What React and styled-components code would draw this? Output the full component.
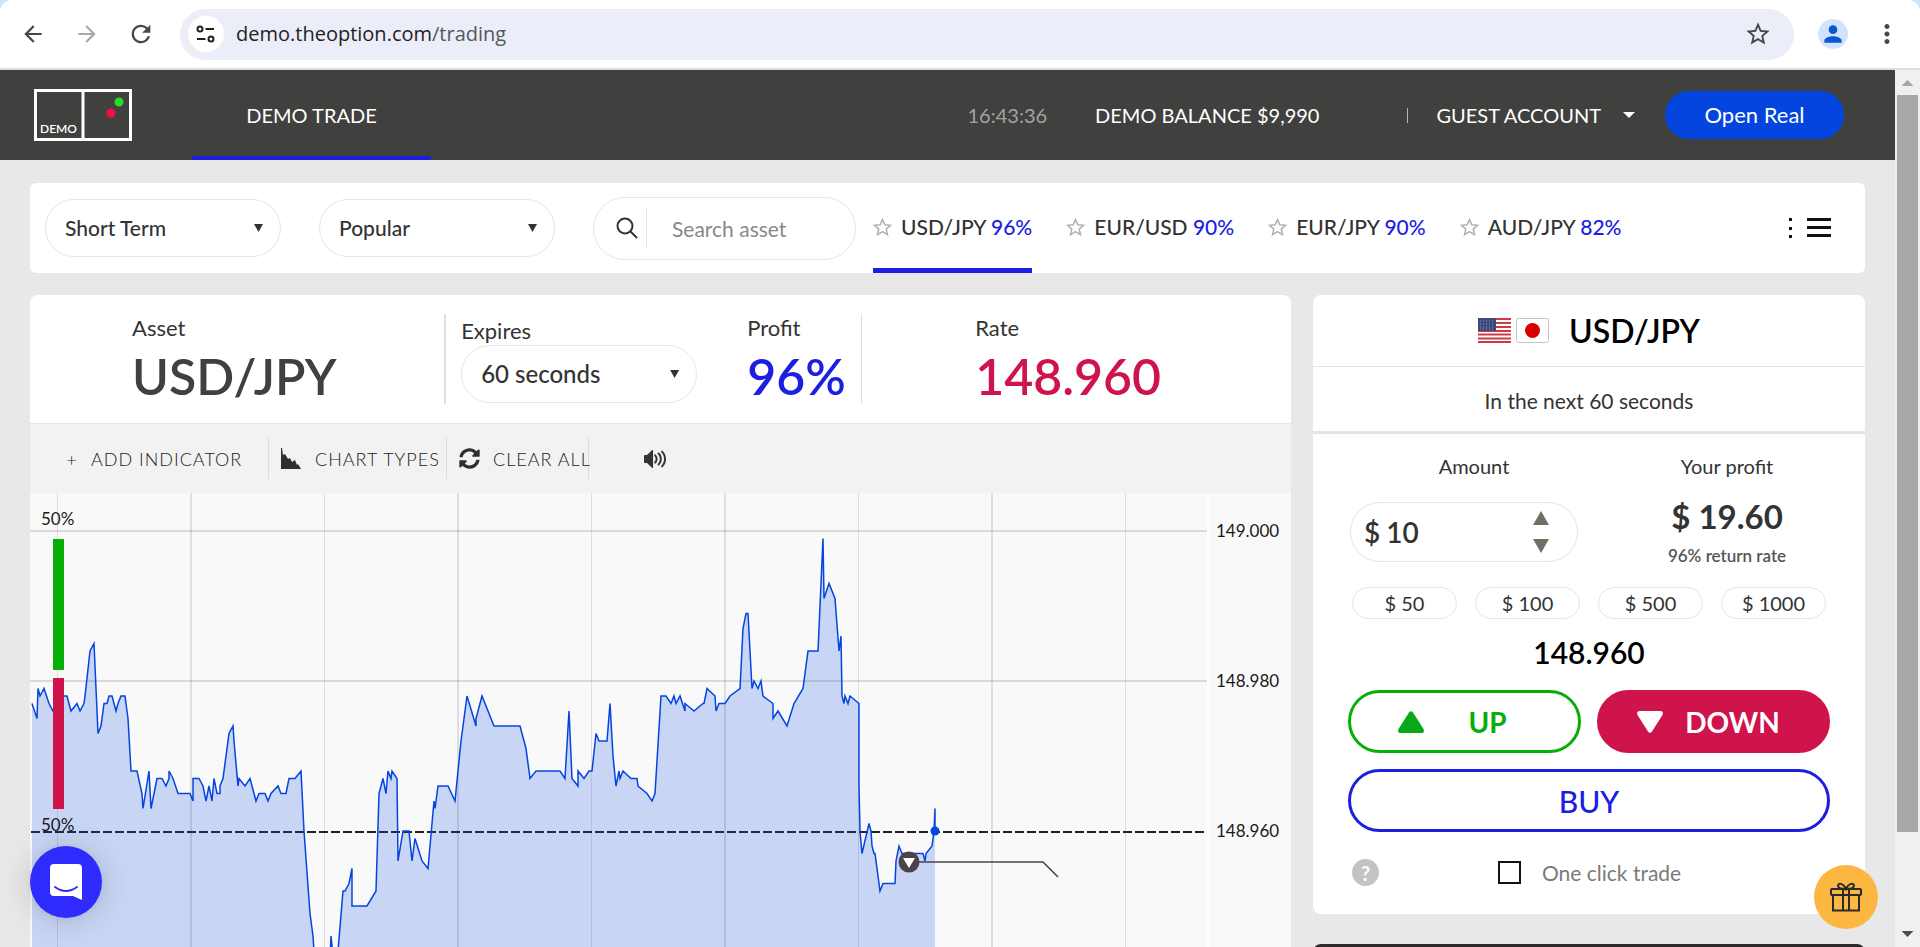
import React, { useState } from "react";
import styled, { createGlobalStyle, css } from "styled-components";
import {
  MdArrowBack,
  MdArrowForward,
  MdRefresh,
  MdStarBorder,
  MdMoreVert,
  MdPerson,
} from "react-icons/md";
import { FaSyncAlt } from "react-icons/fa";
import { ImVolumeHigh } from "react-icons/im";

// chart
const BASE_Y = 38;
const PIP_HEIGHT = 7.5;
const GRID_STEP = 133.5;

// [x, pips below 149.000]
const TICKS = [
  [2, 23], [7, 25], [8, 21], [10, 22], [14, 21], [19, 23], [23, 24], [33, 22],
  [37, 22], [41, 24], [47, 23], [50, 24], [54, 23], [55, 22], [60, 16], [64, 15],
  [65, 18], [68, 27], [71, 26], [74, 23], [77, 23], [79, 22], [82, 22], [86, 24],
  [88, 23], [91, 22], [95, 22], [98, 25], [101, 32], [107, 32], [112, 35], [113, 37],
  [119, 32], [121, 37], [127, 33], [132, 33], [136, 34], [139, 33], [139, 32], [143, 33],
  [148, 35], [160, 35], [163, 36], [163, 33], [169, 33], [173, 34], [176, 36], [179, 34],
  [182, 36], [184, 33], [187, 35], [190, 35], [190, 34], [193, 33], [199, 27], [203, 26],
  [204, 28], [208, 34], [209, 33], [215, 34], [220, 33], [226, 36], [229, 35], [235, 35],
  [238, 36], [241, 35], [248, 34], [251, 35], [256, 35], [259, 33], [265, 33], [271, 32],
  [274, 40], [280, 51], [283, 54], [285, 58], [290, 66], [297, 66], [301, 54], [304, 58],
  [308, 56], [313, 48], [315, 48], [319, 47], [322, 45], [322, 50], [337, 50], [346, 48],
  [349, 35], [353, 33], [356, 35], [358, 32], [361, 33], [362, 32], [367, 33], [368, 44],
  [373, 40], [379, 40], [382, 44], [385, 41], [392, 44], [398, 45], [404, 36], [405, 37],
  [408, 34], [418, 34], [425, 36], [431, 28], [437, 22], [446, 26], [446, 25], [452, 22],
  [464, 26], [490, 26], [496, 29], [500, 33], [506, 32], [530, 32], [535, 33], [539, 24],
  [542, 33], [548, 34], [548, 32], [554, 33], [559, 32], [562, 32], [566, 27], [569, 28],
  [577, 28], [580, 23], [583, 30], [586, 34], [589, 32], [590, 33], [593, 32], [601, 33],
  [607, 33], [608, 34], [617, 35], [622, 36], [625, 35], [631, 22], [636, 22], [641, 23],
  [644, 22], [646, 23], [650, 22], [655, 24], [655, 23], [664, 24], [673, 23], [674, 23],
  [677, 21], [685, 22], [686, 24], [689, 23], [695, 23], [700, 22], [710, 21], [713, 13],
  [716, 11], [718, 11], [722, 21], [724, 20], [728, 21], [731, 20], [733, 22], [743, 23],
  [743, 25], [748, 24], [757, 26], [764, 23], [773, 21], [778, 16], [788, 16], [793, 1],
  [794, 9], [799, 7], [805, 9], [809, 16], [811, 14], [812, 22], [814, 23], [815, 22],
  [818, 23], [820, 22], [829, 23], [829, 34], [830, 40], [832, 43], [839, 39], [841, 40],
  [842, 42], [844, 43], [845, 43], [850, 48], [853, 47], [865, 47], [866, 44], [869, 42],
  [872, 43], [893, 43], [895, 44], [896, 43], [902, 42], [904, 40], [905, 37], [905, 40],
];

const linePoints = TICKS.map(([x, pips]) => `${x},${BASE_Y + pips * PIP_HEIGHT}`).join(" ");
const areaPoints = `${TICKS[0][0]},2000 ${linePoints} 905,2000`;

const ASSETS = [
  { name: "USD/JPY", rate: "96%" },
  { name: "EUR/USD", rate: "90%" },
  { name: "EUR/JPY", rate: "90%" },
  { name: "AUD/JPY", rate: "82%" },
];

const PRICES = ["149.000", "148.980", "148.960"];
const QUICK_AMOUNTS = [50, 100, 500, 1000];

function BrowserBar() {
  return (
    <Browser>
      <BrowserButton aria-label="Back">
        <MdArrowBack size={26} />
      </BrowserButton>
      <BrowserButton aria-label="Forward" $color="#a9a9a9">
        <MdArrowForward size={26} />
      </BrowserButton>
      <BrowserButton aria-label="Reload">
        <MdRefresh size={28} />
      </BrowserButton>
      <AddressBar>
        <SiteInfo aria-label="Site information">
          <svg width="20" height="20" viewBox="0 0 20 20" fill="none" stroke="#1f1f1f" strokeWidth="2">
            <circle cx="4" cy="5" r="2.5" />
            <path d="M9.500 5H18M1 15h8.500" />
            <circle cx="15" cy="15" r="2.500" />
          </svg>
        </SiteInfo>
        <Address>
          demo.theoption.com<span>/trading</span>
        </Address>
        <BrowserButton aria-label="Bookmark">
          <MdStarBorder size={28} />
        </BrowserButton>
      </AddressBar>
      <Profile aria-label="Profile">
        <MdPerson size={26} />
      </Profile>
      <BrowserButton aria-label="Menu">
        <MdMoreVert size={30} />
      </BrowserButton>
    </Browser>
  );
}

function Header() {
  return (
    <HeaderBar>
      <Logo>
        <svg width="98" height="52" viewBox="0 0 98 52" fill="none">
          <path d="M1.500 1.500h95v49h-95zM49 0v52" stroke="#fff" strokeWidth="3" />
          <circle cx="85" cy="13" r="4.500" fill="#27dc2b" />
          <circle cx="77" cy="24" r="4.500" fill="#f30f45" />
        </svg>
        <LogoText>DEMO</LogoText>
      </Logo>
      <NavLink href="#trade">DEMO TRADE</NavLink>
      <HeaderRight>
        <Clock>16:43:36</Clock>
        <Balance>DEMO BALANCE $9,990</Balance>
        <HeaderLine />
        <AccountButton>
          GUEST ACCOUNT
          <Triangle $w={12} $h={6} $down />
        </AccountButton>
        <OpenReal>Open Real</OpenReal>
      </HeaderRight>
    </HeaderBar>
  );
}

function Dropdown({ label, value, size }) {
  return (
    <SelectWrap>
      <Select aria-label={label} defaultValue={value} $size={size}>
        <option>{value}</option>
      </Select>
    </SelectWrap>
  );
}

function Filters() {
  return (
    <FilterBar>
      <Dropdown label="Option type" value="Short Term" />
      <Dropdown label="Category" value="Popular" />
      <Search>
        <svg width="22" height="22" viewBox="0 0 22 22" fill="none" stroke="#333" strokeWidth="2">
          <circle cx="9" cy="9" r="7.500" />
          <path d="M14.500 14.500L21 21" />
        </svg>
        <input type="text" aria-label="Search asset" placeholder="Search asset" />
      </Search>
      <Tabs>
        {ASSETS.map((asset, i) => (
          <Tab key={asset.name} $active={i === 0}>
            <svg width="19" height="18" viewBox="0 0 19 18" fill="none" stroke="#b0b0b0" strokeWidth="1.500">
              <path d="M9.500 1.500l2.300 5.300 5.700.5-4.300 3.800 1.300 5.600-5-3-5 3 1.300-5.600L1.500 7.300l5.700-.5z" />
            </svg>
            <TabText>
              {asset.name} <em>{asset.rate}</em>
            </TabText>
          </Tab>
        ))}
      </Tabs>
      <ListButton aria-label="Asset list">
        <svg width="42" height="22" viewBox="0 0 42 22" fill="#111">
          <path d="M0 1h3v3H0zM0 10h3v3H0zM0 18h3v3H0zM18 1h24v3H18zM18 9h24v3H18zM18 17h24v3H18z" />
        </svg>
      </ListButton>
    </FilterBar>
  );
}

function AssetInfo() {
  return (
    <InfoBar>
      <InfoCell $left={102} $line={2}>
        <InfoLabel>Asset</InfoLabel>
        <InfoValue $color="#40403e">USD/JPY</InfoValue>
      </InfoCell>
      <InfoCell $left={15} $line={1} $row>
        <ExpiresField>
          <InfoLabel>Expires</InfoLabel>
          <Dropdown label="Expires" value="60 seconds" size={24} />
        </ExpiresField>
        <div>
          <InfoLabel>Profit</InfoLabel>
          <InfoValue $color="#1c1ee0">96%</InfoValue>
        </div>
      </InfoCell>
      <InfoCell $left={113}>
        <InfoLabel>Rate</InfoLabel>
        <InfoValue $color="#cf134b">148.960</InfoValue>
      </InfoCell>
    </InfoBar>
  );
}

function ChartToolbar() {
  return (
    <Toolbar>
      <ToolButton $w={203}>
        <PlusSign>+</PlusSign>
        ADD INDICATOR
      </ToolButton>
      <ToolButton $w={178}>
        <svg width="21" height="21" viewBox="0 0 21 21" fill="#2e2e2c">
          <path d="M0 0h1l1 7 2-1 3 5 2-1 2 4 3-2 2 5 1-1 3 5h1v1H0z" />
        </svg>
        CHART TYPES
      </ToolButton>
      <ToolButton $w={142}>
        <FaSyncAlt size={21} />
        CLEAR ALL
      </ToolButton>
      <SoundButton aria-label="Sound">
        <ImVolumeHigh size={22} />
      </SoundButton>
    </Toolbar>
  );
}

function Chart() {
  return (
    <ChartArea>
      <Plot>
        {Array.from({ length: 9 }, (_, i) => (
          <line
            key={i}
            x1={27.5 + i * GRID_STEP}
            x2={27.5 + i * GRID_STEP}
            y1="0"
            y2="100%"
            stroke="#dedede"
            strokeWidth={i % 2 ? 2 : 1}
          />
        ))}
        <path d="M0 38H3000M0 188H3000" stroke="#000" strokeOpacity="0.12" strokeWidth="2" />
        <path d="M1 339H3000" stroke="#222" strokeWidth="2" strokeDasharray="9 3" />
        <polygon points={areaPoints} fill="#0445df" fillOpacity="0.2" />
        <polyline points={linePoints} fill="none" stroke="#0445df" strokeWidth="1.500" />
        <circle cx="905" cy="338" r="4.500" fill="#0445df" />
        <path d="M879 369H1013L1028 384" fill="none" stroke="#4a4448" strokeWidth="1.500" />
        <circle cx="879" cy="369" r="10.500" fill="#4a4448" />
        <path d="M873 365h12l-6 10z" fill="#fff" />
      </Plot>
      <PriceAxis>
        {PRICES.map((price) => (
          <span key={price}>{price}</span>
        ))}
      </PriceAxis>
      <Sentiment>
        <span>50%</span>
        <SentimentBar $color="#08ae08" />
        <SentimentBar $color="#cf134b" />
        <span>50%</span>
      </Sentiment>
    </ChartArea>
  );
}

function Flags() {
  return (
    <FlagRow>
      <svg width="33" height="25" viewBox="0 0 33 25">
        <rect width="33" height="25" rx="2" fill="#fff" />
        <path
          d="M0 1h33M0 5h33M0 9h33M0 13h33M0 16.500h33M0 20.500h33M0 24h33"
          stroke="#cf3a48"
          strokeWidth="2"
        />
        <path d="M0 0h18v13H0z" fill="#3a4a7c" />
        <path
          d="M2 3h15M2 6h15M2 9h15M2 11h15"
          stroke="#8d97b8"
          strokeWidth="1"
          strokeDasharray="1 2"
        />
      </svg>
      <svg width="33" height="25" viewBox="0 0 33 25">
        <rect x=".5" y=".5" width="32" height="24" rx="2" fill="#fff" stroke="#c4c4c4" />
        <circle cx="16.500" cy="12.500" r="7.500" fill="#d80000" />
      </svg>
    </FlagRow>
  );
}

function TradePanel() {
  const [amount, setAmount] = useState(10);
  const [oneClick, setOneClick] = useState(false);

  // 숫자만 입력
  const handleAmount = (e) => {
    setAmount(Number(e.target.value.replace(/\D/g, "")));
  };

  return (
    <TradeCard>
      <TradeTitle>
        <Flags />
        <h2>USD/JPY</h2>
      </TradeTitle>
      <TradeTime>In the next 60 seconds</TradeTime>

      <TradeBody>
        <AmountRow>
          <AmountField>
            <label htmlFor="amount">Amount</label>
            <AmountBox>
              <span>$</span>
              <input id="amount" type="text" value={amount} onChange={handleAmount} />
              <Stepper>
                <button aria-label="Increase" onClick={() => setAmount(amount + 1)}>
                  <Triangle $w={16} $h={14} />
                </button>
                <button aria-label="Decrease" onClick={() => setAmount(Math.max(1, amount - 1))}>
                  <Triangle $w={16} $h={14} $down />
                </button>
              </Stepper>
            </AmountBox>
          </AmountField>
          <Profit>
            <p>Your profit</p>
            <strong>$ {(amount * 1.96).toFixed(2)}</strong>
            <small>96% return rate</small>
          </Profit>
        </AmountRow>

        <QuickRow>
          {QUICK_AMOUNTS.map((value) => (
            <QuickButton key={value} onClick={() => setAmount(value)}>
              $ {value}
            </QuickButton>
          ))}
        </QuickRow>

        <CurrentRate>148.960</CurrentRate>

        <DirectionRow>
          <TradeButton $color="#08ae08" $gap={44} $right={24}>
            <svg width="26" height="22" viewBox="0 0 26 22" fill="#08a818">
              <path d="M11 1.500Q13-1 15 1.500L25.500 18Q27 22 23 22H3Q-1 22 .5 18z" />
            </svg>
            UP
          </TradeButton>
          <TradeButton $color="#cf134b" $filled $gap={22} $right={10}>
            <svg width="26" height="22" viewBox="0 0 26 22" fill="#fff">
              <path d="M11 20.500Q13 23 15 20.500L25.500 4Q27 0 23 0H3Q-1 0 .5 4z" />
            </svg>
            DOWN
          </TradeButton>
        </DirectionRow>
        <TradeButton $color="#1c1ee0" $size={30} $weight={500}>
          BUY
        </TradeButton>

        <OneClickRow>
          <HelpButton aria-label="Help">?</HelpButton>
          <OneClick>
            <input
              type="checkbox"
              checked={oneClick}
              onChange={(e) => setOneClick(e.target.checked)}
            />
            One click trade
          </OneClick>
        </OneClickRow>
      </TradeBody>
    </TradeCard>
  );
}

function ScrollBar() {
  return (
    <ScrollTrack>
      <Triangle $w={12} $h={6} />
      <ScrollThumb />
      <Triangle $w={12} $h={6} $down />
    </ScrollTrack>
  );
}

export default function App() {
  return (
    <Shell>
      <GlobalStyle />
      <BrowserBar />
      <Viewport>
        <Page>
          <Header />
          <Content>
            <Filters />
            <Columns>
              <ChartCard>
                <AssetInfo />
                <ChartToolbar />
                <Chart />
              </ChartCard>
              <SideColumn>
                <TradePanel />
                <NextPanel />
              </SideColumn>
            </Columns>
          </Content>
          <ChatButton aria-label="Open chat">
            <svg width="32" height="37" viewBox="0 0 32 37">
              <path d="M4 0h24q4 0 4 4v32l-9-4H4q-4 0-4-4V4q0-4 4-4z" fill="#fff" />
              <path d="M5 23q11 8 22 0" fill="none" stroke="#2f2bff" strokeWidth="2" strokeLinecap="round" />
            </svg>
          </ChatButton>
          <GiftButton aria-label="Gifts">
            <svg width="32" height="30" viewBox="0 0 32 30" fill="none" stroke="#2b2a28" strokeWidth="2">
              <rect x="1" y="7" width="30" height="6" rx="1" />
              <path d="M3 13v15.500h26V13M13 7v21.500M19 7v21.500" />
              <path d="M16 7C12 7 8 6 8 3.500S13 .5 16 7C19 .5 24 1 24 3.500S20 7 16 7z" />
            </svg>
          </GiftButton>
        </Page>
        <ScrollBar />
      </Viewport>
    </Shell>
  );
}

const GlobalStyle = createGlobalStyle`
  * {
    box-sizing: border-box;
  }

  body {
    margin: 0;
    font-family: "Lato", "Liberation Sans", sans-serif;
    font-size: 20px;
    line-height: 24px;
    color: #333;
    background-color: #d3e3fd;
  }

  button,
  input,
  select {
    font: inherit;
    color: inherit;
    border: 0;
    margin: 0;
    padding: 0;
    background: none;
  }

  button {
    cursor: pointer;
  }

  h2,
  p {
    margin: 0;
  }
`;

const Shell = styled.div`
  height: 100vh;
  display: flex;
  flex-direction: column;
  overflow: hidden;
`;

const Triangle = styled.i`
  display: block;
  width: ${({ $w }) => $w}px;
  height: ${({ $h }) => $h}px;
  background-color: currentColor;
  clip-path: ${({ $down }) =>
    $down ? "polygon(0 0, 100% 0, 50% 100%)" : "polygon(50% 0, 100% 100%, 0 100%)"};
`;

// browser
const Browser = styled.div`
  flex: none;
  height: 70px;
  display: flex;
  align-items: center;
  padding: 0 16px;
  background-color: #fff;
  border-bottom: 2px solid #dedede;
  border-radius: 12px 12px 0 0;
`;

const BrowserButton = styled.button`
  width: 34px;
  height: 34px;
  margin-right: 20px;
  display: flex;
  align-items: center;
  justify-content: center;
  color: ${({ $color }) => $color || "#474747"};

  &:last-child {
    margin-right: 0;
  }
`;

const AddressBar = styled.div`
  flex: 1;
  height: 51px;
  margin-left: 2px;
  padding: 0 19px 0 8px;
  display: flex;
  align-items: center;
  border-radius: 26px;
  background-color: #ebeef8;
`;

const SiteInfo = styled.button`
  width: 36px;
  height: 36px;
  display: flex;
  align-items: center;
  justify-content: center;
  border-radius: 50%;
  background-color: #fff;
`;

const Address = styled.div`
  flex: 1;
  margin-left: 12px;
  font-family: "Open Sans", sans-serif;
  color: #1f1f1f;

  span {
    color: #55585c;
  }
`;

const Profile = styled.button`
  width: 30px;
  height: 30px;
  margin: 0 22px 0 24px;
  display: flex;
  align-items: center;
  justify-content: center;
  border-radius: 50%;
  color: #0b57d0;
  background-color: #d3e3fd;
`;

const Viewport = styled.div`
  flex: 1;
  min-height: 0;
  display: flex;
`;

const Page = styled.main`
  flex: 1;
  min-width: 0;
  display: flex;
  flex-direction: column;
  position: relative;
  overflow: hidden;
  background-color: #e8e8e8;
`;

const ScrollTrack = styled.div`
  width: 25px;
  padding: 10px 2px;
  display: flex;
  flex-direction: column;
  align-items: center;
  color: #4d4d4d;
  background-color: #f0f0f0;

  & > i:first-child {
    color: #a6a6a6;
  }
`;

const ScrollThumb = styled.div`
  width: 21px;
  height: 86%;
  margin: 9px 0 auto;
  background-color: #a8a8a8;
`;

// header
const HeaderBar = styled.header`
  flex: none;
  height: 90px;
  display: flex;
  align-items: center;
  padding: 0 51px 0 34px;
  color: #fff;
  background-color: #40403e;
`;

const Logo = styled.div`
  position: relative;
  height: 52px;
  margin-right: 60px;
`;

const LogoText = styled.span`
  position: absolute;
  left: 6px;
  bottom: 4px;
  font-size: 12px;
  line-height: 16px;
  font-weight: 600;
`;

const NavLink = styled.a`
  width: 239px;
  height: 90px;
  padding-top: 4px;
  display: flex;
  align-items: center;
  justify-content: center;
  color: inherit;
  text-decoration: none;
  border-bottom: 4px solid #1c1ee0;
`;

const HeaderRight = styled.div`
  margin-left: auto;
  display: flex;
  align-items: center;
`;

const Clock = styled.time`
  margin-right: 48px;
  color: #a3a3a1;
`;

const Balance = styled.span`
  margin-right: 88px;
`;

const HeaderLine = styled.span`
  width: 1px;
  height: 15px;
  margin-right: 28px;
  background-color: #b5b5b3;
`;

const AccountButton = styled.button`
  margin-right: 30px;
  display: flex;
  align-items: center;
  gap: 22px;
`;

const OpenReal = styled.button`
  width: 179px;
  height: 48px;
  border-radius: 24px;
  font-size: 22px;
  background-color: #0445df;
`;

// filters
const Content = styled.div`
  flex: 1;
  min-height: 0;
  display: flex;
  flex-direction: column;
  gap: 22px;
  padding: 23px 30px 0;
`;

const FilterBar = styled.section`
  flex: none;
  height: 90px;
  display: flex;
  align-items: center;
  padding: 0 34px 0 15px;
  border-radius: 6px;
  background-color: #fff;
`;

const SelectWrap = styled.div`
  position: relative;
  width: 236px;
  margin-right: 38px;

  &::after {
    content: "";
    position: absolute;
    right: 18px;
    top: 25px;
    width: 9px;
    height: 8px;
    background-color: #333;
    clip-path: polygon(0 0, 100% 0, 50% 100%);
    pointer-events: none;
  }
`;

const Select = styled.select`
  display: block;
  width: 100%;
  height: 58px;
  padding: 0 40px 0 19px;
  appearance: none;
  border: 1px solid #e6e6e6;
  border-radius: 29px;
  font-size: ${({ $size = 21 }) => $size}px;
  font-weight: 500;
`;

const Search = styled.label`
  width: 263px;
  height: 63px;
  padding-left: 22px;
  display: flex;
  align-items: center;
  gap: 8px;
  border: 1px solid #e6e6e6;
  border-radius: 32px;

  input {
    flex: 1;
    min-width: 0;
    height: 41px;
    padding-left: 25px;
    margin-right: 20px;
    font-size: 21px;
    border-left: 1px solid #e6e6e6;
  }

  input::placeholder {
    color: #888;
  }
`;

const Tabs = styled.nav`
  flex: 1;
  height: 90px;
  margin-left: 17px;
  display: flex;
  gap: 34px;
`;

const Tab = styled.button`
  display: flex;
  align-items: center;
  gap: 9px;
  border-bottom: 5px solid transparent;
  padding-top: 3px;

  ${({ $active }) =>
    $active &&
    css`
      border-color: #1c1ee0;
    `}
`;

const TabText = styled.span`
  font-size: 21px;
  font-weight: 500;

  em {
    font-style: normal;
    color: #1c1ee0;
  }
`;

const ListButton = styled.button`
  height: 22px;
  line-height: 0;
`;

// chart card
const Columns = styled.div`
  flex: 1;
  min-height: 0;
  display: grid;
  grid-template-columns: minmax(0, 1fr) 552px;
  gap: 22px;
`;

const ChartCard = styled.section`
  min-height: 0;
  display: flex;
  flex-direction: column;
  overflow: hidden;
  border-radius: 8px 8px 0 0;
  background-color: #fff;
`;

const InfoBar = styled.div`
  display: flex;
  padding: 19px 0;
  border-bottom: 1px solid #e6e6e6;
`;

const InfoCell = styled.div`
  flex: 0 0 33%;
  height: 90px;
  padding-left: ${({ $left }) => $left}px;
  border-right: ${({ $line = 0 }) => $line}px solid #e0e0e0;

  ${({ $row }) =>
    $row &&
    css`
      display: flex;
      gap: 50px;
    `}
`;

const InfoLabel = styled.p`
  padding-top: 2px;
  font-size: 22px;
`;

const InfoValue = styled.p`
  margin-top: 6px;
  font-size: 50px;
  line-height: 60px;
  font-weight: 600;
  color: ${({ $color }) => $color};
`;

const ExpiresField = styled.div`
  padding-top: 3px;
  display: flex;
  flex-direction: column;
  gap: 2px;

  ${SelectWrap} {
    margin: 0;
  }
`;

const Toolbar = styled.div`
  flex: none;
  height: 69px;
  padding-left: 36px;
  display: flex;
  align-items: center;
  background-color: #f2f2f2;
`;

const ToolButton = styled.button`
  width: ${({ $w }) => $w}px;
  height: 41px;
  display: flex;
  align-items: center;
  gap: 13px;
  font-size: 18px;
  font-weight: 300;
  letter-spacing: 1px;
  white-space: nowrap;
  color: #1a1a1a;
  border-right: 1px solid #dcdcdc;

  & + & {
    padding-left: 12px;
  }

  svg {
    flex: none;
    color: #2e2e2c;
  }
`;

const PlusSign = styled.span`
  width: 12px;
`;

const SoundButton = styled.button`
  height: 22px;
  margin-left: 55px;
  line-height: 0;
`;

const ChartArea = styled.div`
  flex: 1;
  min-height: 0;
  display: flex;
  position: relative;
  background-color: #f9f9f9;
`;

const Plot = styled.svg`
  flex: 1;
  min-width: 0;
  height: 100%;
  display: block;
`;

const PriceAxis = styled.div`
  width: 84px;
  padding: 26px 0 0 7px;
  display: flex;
  flex-direction: column;
  gap: 126px;
  font-size: 17px;
  color: #1a1a1a;
  border-left: 2px solid #fff;
`;

const Sentiment = styled.div`
  position: absolute;
  top: 14px;
  left: 11px;
  display: flex;
  flex-direction: column;
  gap: 8px;
  font-size: 17px;
  color: #1a1a1a;

  span:last-child {
    line-height: 16px;
  }
`;

const SentimentBar = styled.div`
  width: 11px;
  height: 131px;
  margin-left: 12px;
  background-color: ${({ $color }) => $color};
`;

// trade panel
const SideColumn = styled.div`
  display: flex;
  flex-direction: column;
  gap: 30px;
`;

const TradeCard = styled.section`
  flex: none;
  border-radius: 8px;
  background-color: #fff;
`;

const NextPanel = styled.section`
  flex: none;
  height: 60px;
  border-radius: 8px;
  background-color: #2f2a2e;
`;

const TradeTitle = styled.div`
  height: 72px;
  display: flex;
  align-items: center;
  justify-content: center;
  gap: 20px;
  border-bottom: 1px solid #e3e3e3;

  h2 {
    font-size: 32px;
    line-height: 36px;
    font-weight: 600;
    color: #000;
  }
`;

const FlagRow = styled.div`
  display: flex;
  gap: 5px;
`;

const TradeTime = styled.p`
  height: 67px;
  padding-top: 22px;
  font-size: 21px;
  text-align: center;
  border-bottom: 3px solid #e3e3e3;
`;

const TradeBody = styled.div`
  padding: 20px 35px 28px;
`;

const AmountRow = styled.div`
  display: flex;
  justify-content: space-between;
`;

const AmountField = styled.div`
  width: 228px;
  margin-left: 2px;
  display: flex;
  flex-direction: column;
  gap: 24px;

  label {
    padding-left: 20px;
    text-align: center;
  }
`;

const AmountBox = styled.div`
  height: 60px;
  padding: 0 28px 0 13px;
  display: flex;
  align-items: center;
  gap: 6px;
  font-size: 28px;
  font-weight: 600;
  border: 1px solid #e6e6e6;
  border-radius: 30px;

  input {
    flex: 1;
    min-width: 0;
  }
`;

const Stepper = styled.div`
  display: flex;
  flex-direction: column;
  gap: 14px;
  color: #6f6f64;
`;

const Profit = styled.div`
  width: 206px;
  display: flex;
  flex-direction: column;
  align-items: center;

  strong {
    margin-top: 20px;
    font-size: 33px;
    line-height: 36px;
    font-weight: 700;
  }

  small {
    margin-top: 14px;
    font-size: 17px;
    line-height: 16px;
    font-weight: 600;
    color: #555;
  }
`;

const QuickRow = styled.div`
  margin: 23px 4px 0;
  display: grid;
  grid-template-columns: repeat(4, 1fr);
  gap: 18px;
`;

const QuickButton = styled.button`
  height: 32px;
  border: 1px solid #e6e6e6;
  border-radius: 16px;
`;

const CurrentRate = styled.p`
  margin: 15px 0 20px;
  font-size: 30px;
  line-height: 36px;
  font-weight: 600;
  text-align: center;
  color: #000;
`;

const DirectionRow = styled.div`
  margin-bottom: 16px;
  display: grid;
  grid-template-columns: repeat(2, 1fr);
  gap: 16px;
`;

const TradeButton = styled.button`
  width: 100%;
  height: 63px;
  padding-right: ${({ $right = 0 }) => $right}px;
  display: flex;
  align-items: center;
  justify-content: center;
  gap: ${({ $gap = 0 }) => $gap}px;
  font-size: ${({ $size = 28 }) => $size}px;
  font-weight: ${({ $weight = 700 }) => $weight};
  border: 3px solid ${({ $color }) => $color};
  border-radius: 32px;
  color: ${({ $filled, $color }) => ($filled ? "#fff" : $color)};
  background-color: ${({ $filled, $color }) => ($filled ? $color : "#fff")};
`;

const OneClickRow = styled.div`
  margin-top: 27px;
  padding-left: 4px;
  display: flex;
  align-items: center;
`;

const HelpButton = styled.button`
  width: 27px;
  height: 27px;
  border-radius: 50%;
  font-weight: 700;
  color: #fff;
  background-color: #c3c3c3;
`;

const OneClick = styled.label`
  margin-left: 119px;
  display: flex;
  align-items: center;
  gap: 21px;
  font-size: 21px;
  color: #7a7a7a;

  input {
    width: 23px;
    height: 23px;
    appearance: none;
    border: 2px solid #111;
  }

  input:checked {
    background-color: #1c1ee0;
  }
`;

// floating buttons
const ChatButton = styled.button`
  position: absolute;
  left: 30px;
  bottom: 29px;
  width: 72px;
  height: 72px;
  display: flex;
  align-items: center;
  justify-content: center;
  border-radius: 50%;
  background-color: #2f2bff;
  box-shadow: 0 1px 6px rgba(0, 0, 0, 0.06), 0 2px 32px rgba(0, 0, 0, 0.16);
`;

const GiftButton = styled.button`
  position: absolute;
  right: 17px;
  bottom: 18px;
  width: 64px;
  height: 64px;
  display: flex;
  align-items: center;
  justify-content: center;
  border-radius: 50%;
  background-color: #fcb642;
`;
